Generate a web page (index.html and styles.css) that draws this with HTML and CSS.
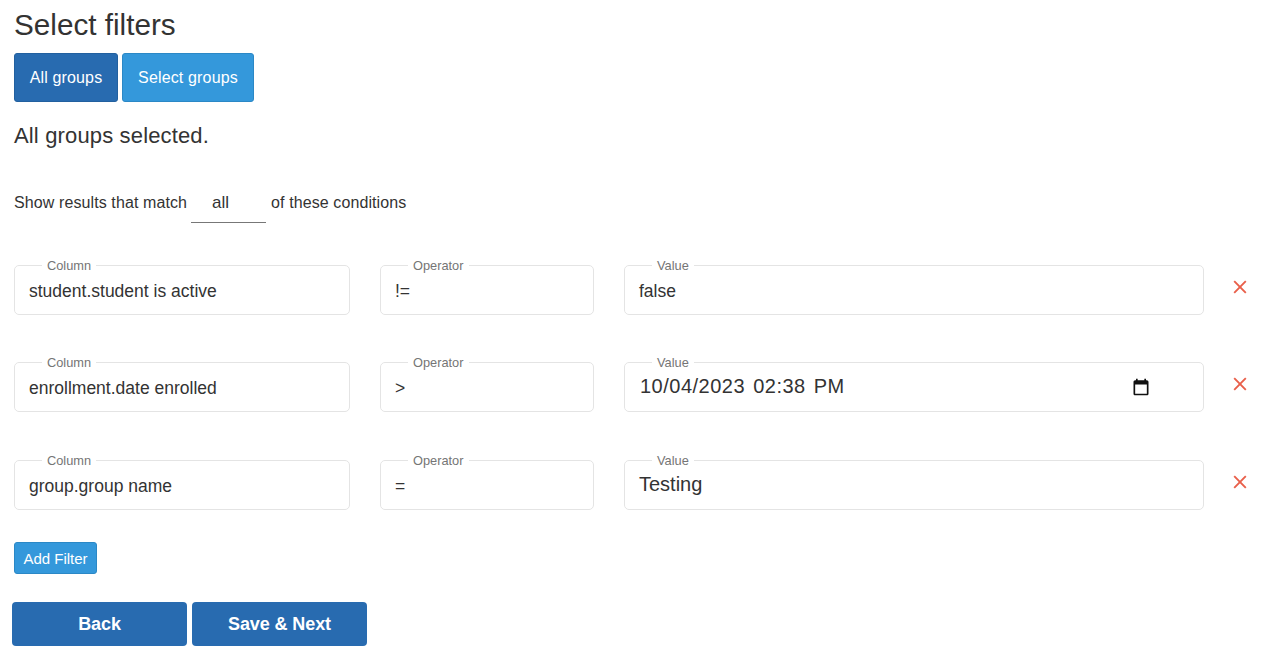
FILE: index.html
```html
<!DOCTYPE html>
<html lang="en">
<head>
<meta charset="utf-8">
<title>Select filters</title>
<link rel="stylesheet" href="styles.css">
</head>
<body>
<main class="page">
  <h1 class="title">Select filters</h1>
  <div class="group-buttons">
    <button class="btn btn-active">All groups</button>
    <button class="btn btn-light btn-select">Select groups</button>
  </div>
  <p class="status">All groups selected.</p>
  <div class="match-line">
    <span class="match-text">Show results that match</span>
    <span class="match-select">all</span>
    <span class="match-text">of these conditions</span>
  </div>
  <div class="filters">
    <div class="filter-row">
      <fieldset class="field"><legend>Column</legend><span class="val">student.student is active</span></fieldset>
      <fieldset class="field"><legend>Operator</legend><span class="val">!=</span></fieldset>
      <fieldset class="field"><legend>Value</legend><span class="val">false</span></fieldset>
      <button class="remove" aria-label="Remove"><svg width="14" height="14" viewBox="0 0 14 14"><path d="M1.200 1.200L12.800 12.800M12.800 1.200L1.200 12.800" stroke="#e95f4a" stroke-width="1.900" fill="none"/></svg></button>
    </div>
    <div class="filter-row">
      <fieldset class="field"><legend>Column</legend><span class="val">enrollment.date enrolled</span></fieldset>
      <fieldset class="field"><legend>Operator</legend><span class="val">&gt;</span></fieldset>
      <fieldset class="field field-date"><legend>Value</legend><span class="val val-date">10/04/2023 02:38 PM</span>
        <svg class="cal" width="20" height="20" viewBox="0 0 24 24"><path d="M19 4h-1V2h-2v2H8V2H6v2H5C3.900 4 3 4.900 3 6v14c0 1.100.9 2 2 2h14c1.100 0 2-.9 2-2V6c0-1.100-.9-2-2-2zm0 16H5V9h14v11z" fill="#111"/></svg>
      </fieldset>
      <button class="remove" aria-label="Remove"><svg width="14" height="14" viewBox="0 0 14 14"><path d="M1.200 1.200L12.800 12.800M12.800 1.200L1.200 12.800" stroke="#e95f4a" stroke-width="1.900" fill="none"/></svg></button>
    </div>
    <div class="filter-row">
      <fieldset class="field"><legend>Column</legend><span class="val">group.group name</span></fieldset>
      <fieldset class="field"><legend>Operator</legend><span class="val">=</span></fieldset>
      <fieldset class="field"><legend>Value</legend><span class="val val-large">Testing</span></fieldset>
      <button class="remove" aria-label="Remove"><svg width="14" height="14" viewBox="0 0 14 14"><path d="M1.200 1.200L12.800 12.800M12.800 1.200L1.200 12.800" stroke="#e95f4a" stroke-width="1.900" fill="none"/></svg></button>
    </div>
  </div>
  <button class="btn btn-light btn-small">Add Filter</button>
  <div class="nav-buttons">
    <button class="nav-btn">Back</button>
    <button class="nav-btn">Save &amp; Next</button>
  </div>
</main>
</body>
</html>
```
FILE: styles.css
```css
* { box-sizing: border-box; }
html, body { margin: 0; padding: 0; background: #fff; }
body { font-family: "Liberation Sans", Arial, sans-serif; color: #333; }
.page { padding: 0 14px; }
.title { margin: 0; padding-top: 6px; font-size: 29.700px; line-height: 38px; font-weight: 400; height: 53px; }
.group-buttons { display: flex; gap: 4px; }
.btn { font-family: inherit; color: #fff; font-size: 16px; letter-spacing: 0.150px; height: 49px; padding: 0; width: 104px; border-radius: 3px; cursor: pointer; }
.btn-select { width: 132px; }
.btn-active { background: #286bb0; border: 1px solid #22609f; }
.btn-light { background: #3498db; border: 1px solid #2b88c6; }
.status { margin: 0; font-size: 22px; letter-spacing: 0.150px; line-height: 26px; padding-top: 21px; height: 68px; }
.match-line { display: flex; align-items: center; gap: 4px; font-size: 16px; letter-spacing: 0.100px; height: 60px; margin-bottom: 27px; padding-top: 4px; }
.match-text { padding-top: 2px; }
.match-select { width: 75px; height: 42px; margin-right: 1px; padding: 0 21px; line-height: 44px; border-bottom: 1px solid #777; font-size: 17px; letter-spacing: 0; }
.filter-row { display: grid; grid-template-columns: 336px 214px 580px 72px; column-gap: 30px; height: 58px; margin-bottom: 39px; align-items: end; }
.filter-row:nth-child(2) { margin-bottom: 40px; }
.field { margin: 0; min-width: 0; height: 58px; padding: 0 14px; border: 1px solid #e4e4e4; border-radius: 5px; display: flex; position: relative; }
.field legend { margin-left: 13px; padding: 2px 5px 0; font-size: 12.800px; line-height: 14px; color: #757575; }
.val { display: block; font-size: 17.500px; line-height: 24px; padding-top: 6px; color: #333; }
.val-date { font-size: 20px; padding-top: 4px; letter-spacing: 0.500px; word-spacing: 2px; padding-left: 1px; }
.val-large { font-size: 20px; padding-top: 4px; }
.cal { position: absolute; right: 52px; top: 7px; }
.remove { background: none; border: 0; padding: 0; width: 14px; height: 14px; cursor: pointer; justify-self: start; align-self: start; margin-top: 23px; margin-left: -1px; }
.remove svg { display: block; }
.btn-small { display: block; font-size: 15px; letter-spacing: 0; width: 83px; height: 32px; padding: 0; margin-top: -7px; }
.nav-buttons { display: flex; gap: 5px; margin: 28px 0 0 -2px; }
.nav-btn { width: 175px; height: 44px; font-family: inherit; font-size: 18px; letter-spacing: -0.100px; font-weight: 700; color: #fff; background: #286bb0; border: 0; border-radius: 4px; cursor: pointer; }
```
